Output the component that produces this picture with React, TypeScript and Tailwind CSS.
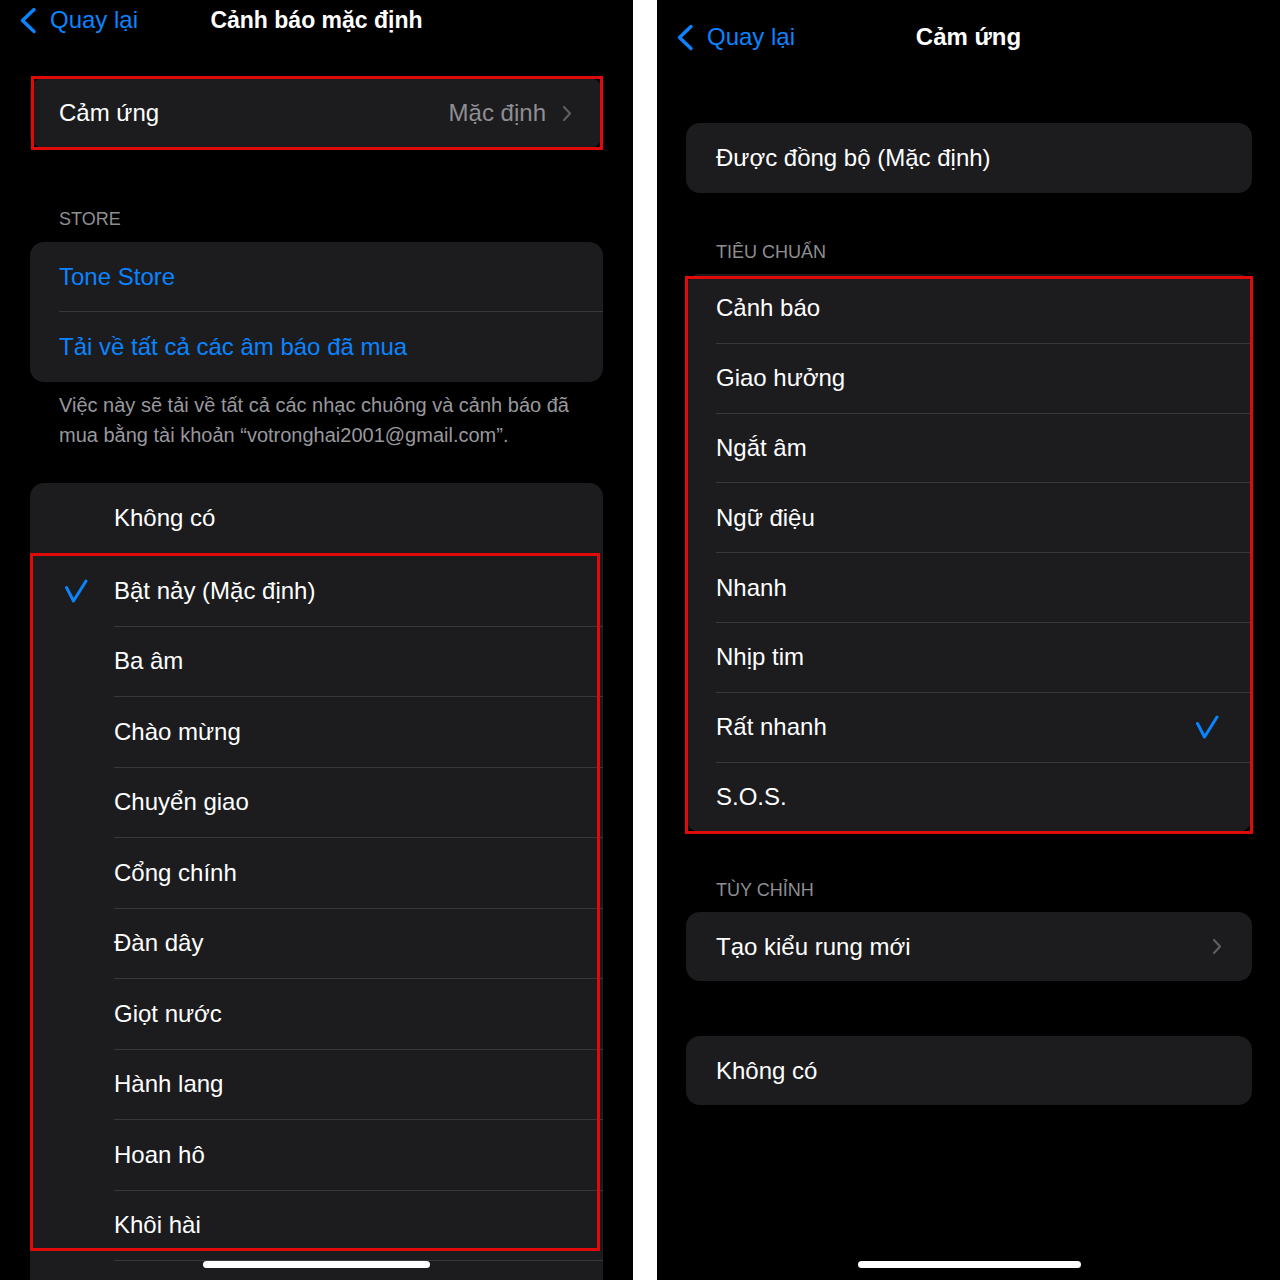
import React from 'react';

const font = "font-['Liberation_Sans',Arial,sans-serif]";

const BackChevron = () => (
  <svg width="18" height="27" viewBox="0 0 18 27" fill="none">
    <polyline points="15,2.5 3.5,13.5 15,24.5" stroke="#0a84ff" strokeWidth="3.4" strokeLinecap="round" strokeLinejoin="round" />
  </svg>
);

const RowChevron = () => (
  <svg width="10" height="17" viewBox="0 0 10 17" fill="none">
    <polyline points="2,2 8,8.5 2,15" stroke="#5d5d62" strokeWidth="2.2" strokeLinecap="round" strokeLinejoin="round" />
  </svg>
);

const Check = () => (
  <svg width="24" height="24" viewBox="0 0 24 24" fill="none">
    <polyline points="2.5,8.5 9.5,22 22,2" stroke="#0a84ff" strokeWidth="3" strokeLinecap="round" strokeLinejoin="round" />
  </svg>
);

const Back = () => (
  <div className="flex items-center gap-[13px] pl-[19px]">
    <BackChevron />
    <span className="text-[24px] text-[#0a84ff]">Quay lại</span>
  </div>
);

const HomeBar = ({ className }: { className: string }) => (
  <div className={`absolute h-[7px] rounded-full bg-white ${className}`} />
);

const leftTones = [
  'Bật nảy (Mặc định)',
  'Ba âm',
  'Chào mừng',
  'Chuyển giao',
  'Cổng chính',
  'Đàn dây',
  'Giọt nước',
  'Hành lang',
  'Hoan hô',
  'Khôi hài',
];

const haptics = ['Cảnh báo', 'Giao hưởng', 'Ngắt âm', 'Ngữ điệu', 'Nhanh', 'Nhịp tim', 'Rất nhanh', 'S.O.S.'];

const LeftPanel = () => (
  <div className="relative h-[1280px] w-[633px] shrink-0 overflow-hidden bg-black">
    <nav className="grid h-10 grid-cols-[1fr_auto_1fr] items-center">
      <Back />
      <div className="text-[23px] font-bold text-white">Cảnh báo mặc định</div>
      <div />
    </nav>

    <div className="relative mx-[30px] mt-[38px]">
      <div className="flex h-[70px] items-center justify-between rounded-[14px] bg-[#1c1c1e] pl-[29px] pr-[31px] text-[24px] text-white">
        <span>Cảm ứng</span>
        <span className="flex items-center gap-[16px] text-[#8e8e93]">
          Mặc định
          <RowChevron />
        </span>
      </div>
      <div className="pointer-events-none absolute -top-[2px] -bottom-[2px] left-[1px] right-0 border-[3px] border-[#e10a0a]" />
    </div>

    <div className="mt-[60px] px-[59px] text-[18px] leading-[22px] text-[#8e8e93]">STORE</div>

    <div className="mx-[30px] mt-[12px] rounded-[14px] bg-[#1c1c1e] text-[24px] text-[#0a84ff]">
      <div className="flex h-[70px] pl-[29px]">
        <div className="flex flex-1 items-center border-b border-[#38383a]">Tone Store</div>
      </div>
      <div className="flex h-[70px] items-center pl-[29px]">Tải về tất cả các âm báo đã mua</div>
    </div>

    <p className="mt-[8px] px-[59px] text-[20px] leading-[30px] text-[#98989e]">
      Việc này sẽ tải về tất cả các nhạc chuông và cảnh báo đã
      <br />
      mua bằng tài khoản “votronghai2001@gmail.com”.
    </p>

    <div className="mx-[30px] mt-[33px] rounded-t-[14px] bg-[#1c1c1e] text-[24px] text-white">
      <div className="flex h-[73px] pb-[3px]">
        <div className="w-[84px]" />
        <div className="flex flex-1 items-center">Không có</div>
      </div>
      <div className="relative">
        {leftTones.map((t, i) => (
          <div key={t} className="flex h-[70.5px]">
            <div className="flex w-[84px] items-center pl-[34px]">{i === 0 && <Check />}</div>
            <div className="flex flex-1 items-center border-b border-[#38383a]">{t}</div>
          </div>
        ))}
        <div className="pointer-events-none absolute -top-[3px] left-0 right-[3px] h-[698px] border-[3px] border-[#e10a0a]" />
      </div>
      <div className="h-[70px]" />
    </div>

    <HomeBar className="left-[203px] top-[1261px] w-[227px]" />
  </div>
);

const RightPanel = () => (
  <div className="relative h-[1280px] flex-1 overflow-hidden bg-black">
    <nav className="grid h-[74px] grid-cols-[1fr_auto_1fr] items-center">
      <Back />
      <div className="text-[24px] font-bold text-white">Cảm ứng</div>
      <div />
    </nav>

    <div className="ml-[29px] mr-[28px] mt-[49px] flex h-[70px] items-center rounded-[14px] bg-[#1c1c1e] pl-[30px] text-[24px] text-white">
      Được đồng bộ (Mặc định)
    </div>

    <div className="mt-[48px] px-[59px] text-[18px] leading-[22px] text-[#8e8e93]">TIÊU CHUẨN</div>

    <div className="relative ml-[29px] mr-[28px] mt-[11px]">
      <div className="rounded-[14px] bg-[#1c1c1e] text-[24px] text-white">
        {haptics.map((h, i) => (
          <div key={h} className="flex h-[69.8px] pl-[30px]">
            <div
              className={`flex flex-1 items-center justify-between pr-[33px] ${
                i < haptics.length - 1 ? 'border-b border-[#38383a]' : ''
              }`}
            >
              <span>{h}</span>
              {h === 'Rất nhanh' && <Check />}
            </div>
          </div>
        ))}
      </div>
      <div className="pointer-events-none absolute -left-px -right-px top-[2px] -bottom-[2px] border-[3px] border-[#e10a0a]" />
    </div>

    <div className="mt-[47px] px-[59px] text-[18px] leading-[22px] text-[#8e8e93]">TÙY CHỈNH</div>

    <div className="ml-[29px] mr-[28px] mt-[11px] flex h-[69px] items-center justify-between rounded-[14px] bg-[#1c1c1e] pl-[30px] pr-[30px] text-[24px] text-white">
      <span>Tạo kiểu rung mới</span>
      <RowChevron />
    </div>

    <div className="ml-[29px] mr-[28px] mt-[55px] flex h-[69px] items-center rounded-[14px] bg-[#1c1c1e] pl-[30px] text-[24px] text-white">
      Không có
    </div>

    <HomeBar className="left-[201px] top-[1261px] w-[223px]" />
  </div>
);

export default function App() {
  return (
    <div className={`flex h-[1280px] w-[1280px] gap-[24px] bg-white ${font}`}>
      <LeftPanel />
      <RightPanel />
    </div>
  );
}
